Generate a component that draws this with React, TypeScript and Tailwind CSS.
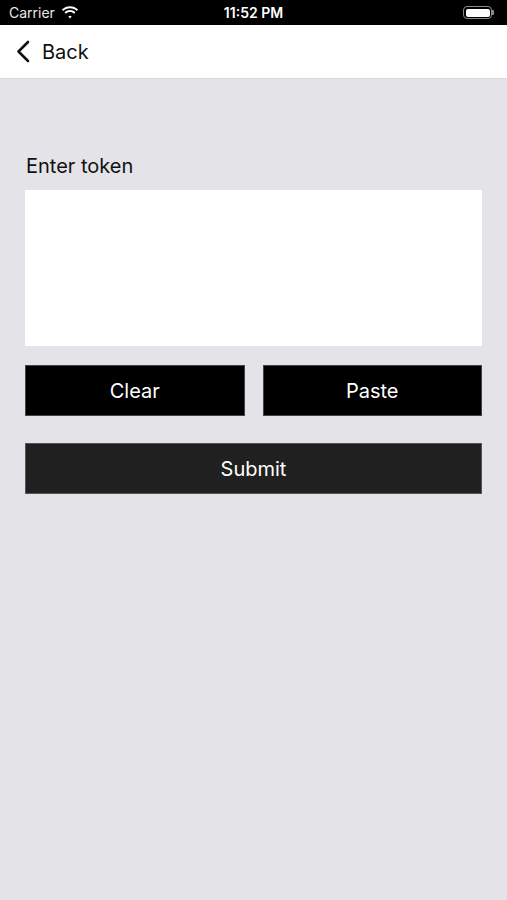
import { useState } from 'react';

export default function App() {
  const [token, setToken] = useState('');

  return (
    <div
      className="min-h-[900px] w-full bg-[#e4e3e8] flex flex-col"
      style={{ fontFamily: 'Inter, "Liberation Sans", Arial, sans-serif' }}
    >
      {/* Status bar */}
      <div className="h-[25px] bg-black text-white flex items-center justify-between px-[9px] relative">
        <div className="flex items-center gap-[6px]">
          <span className="text-[14px] leading-none text-[#e8e8e8]">Carrier</span>
          <svg width="18" height="13" viewBox="0 0 18 13" fill="white">
            <path d="M9 2.2c2.6 0 5 1 6.8 2.7l1.3-1.4C14.9 1.4 12.1.2 9 .2S3.1 1.4.9 3.5l1.3 1.4C4 3.2 6.4 2.2 9 2.2z" />
            <path d="M9 6.1c1.6 0 3 .6 4.1 1.6l1.3-1.4C13 4.9 11.1 4.1 9 4.1s-4 .8-5.4 2.2l1.3 1.4C6 6.7 7.4 6.1 9 6.1z" />
            <path d="M9 9.8c.7 0 1.3.3 1.7.7L9 12.6l-1.7-2.1c.4-.4 1-.7 1.7-.7z" />
          </svg>
        </div>
        <span className="absolute left-1/2 -translate-x-1/2 text-[14px] font-semibold leading-none">11:52 PM</span>
        <div className="flex items-center pr-[4px]">
          <div className="w-[29px] h-[13px] rounded-[4px] border-[1.5px] border-[#8a8a8a] p-[1.5px]">
            <div className="w-full h-full bg-white rounded-[2px]" />
          </div>
          <div className="w-[2px] h-[5px] bg-[#8a8a8a] rounded-r-[1px]" />
        </div>
      </div>

      {/* Nav bar */}
      <div className="h-[54px] bg-white border-b border-[#d8d8dc] flex items-center px-[16px]">
        <button className="flex items-center gap-[12px] text-[#111]">
          <svg width="14" height="23" viewBox="0 0 14 23" fill="none" stroke="#111" strokeWidth="2.6" strokeLinecap="round" strokeLinejoin="round">
            <path d="M12 2L2.5 11.5 12 21" />
          </svg>
          <span className="text-[20px] leading-none">Back</span>
        </button>
      </div>

      {/* Form */}
      <div className="px-[25px] pt-[77px] flex flex-col">
        <label className="text-[20px] leading-none text-[#111] ml-[1px]">Enter token</label>
        <textarea
          value={token}
          onChange={(e) => setToken(e.target.value)}
          className="mt-[14px] h-[156px] w-full bg-white resize-none outline-none p-2 text-[16px]"
        />
        <div className="mt-[19px] grid grid-cols-2 gap-[18px]">
          <button
            onClick={() => setToken('')}
            className="h-[51px] bg-black text-white text-[20px] border border-[#444]"
          >
            Clear
          </button>
          <button className="h-[51px] bg-black text-white text-[20px] border border-[#444]">
            Paste
          </button>
        </div>
        <button className="mt-[27px] h-[51px] bg-[#202020] text-white text-[20px] border border-[#555]">
          Submit
        </button>
      </div>
    </div>
  );
}
